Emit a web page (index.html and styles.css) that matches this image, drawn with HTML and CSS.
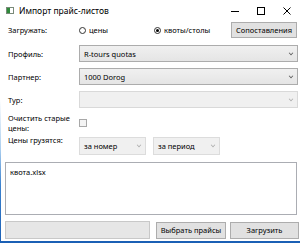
FILE: index.html
```html
<!DOCTYPE html>
<html lang="ru">
<head>
    <meta charset="UTF-8">
    <title>Импорт прайс-листов</title>
    <link rel="stylesheet" href="styles.css">
</head>
<body>
<div class="desk">
  <div class="window">
    <div class="titlebar">
      <span class="app-icon"><span></span></span>
      <span class="title">Импорт прайс-листов</span>
      <span class="wbtn">
        <svg width="8" height="8" viewBox="0 0 8 8"><path d="M0 4.5h8" stroke="#000" stroke-width="1"/></svg>
      </span>
      <span class="wbtn">
        <svg width="8" height="8" viewBox="0 0 8 8"><rect x="0.5" y="0.5" width="7" height="7" fill="none" stroke="#000" stroke-width="1"/></svg>
      </span>
      <span class="wbtn">
        <svg width="8" height="8" viewBox="0 0 8 8"><path d="M0.5 0.5l7 7M7.5 0.5l-7 7" stroke="#000" stroke-width="1"/></svg>
      </span>
    </div>

    <div class="content">
      <div class="row row-load">
        <label class="lbl">Загружать:</label>
        <label class="radio"><span class="dot"></span>цены</label>
        <label class="radio on"><span class="dot"></span>квоты/столы</label>
        <button class="btn btn-map">Сопоставления</button>
      </div>

      <div class="row row-sel">
        <label class="lbl">Профиль:</label>
        <div class="select wide">R-tours quotas<span class="chev"></span></div>
      </div>
      <div class="row row-sel">
        <label class="lbl">Партнер:</label>
        <div class="select wide">1000 Dorog<span class="chev"></span></div>
      </div>
      <div class="row row-sel">
        <label class="lbl">Тур:</label>
        <div class="select wide off"><span class="chev"></span></div>
      </div>

      <div class="row row-clear">
        <label class="lbl">Очистить старые<br>цены:</label>
        <span class="check"></span>
      </div>

      <div class="row row-mode">
        <label class="lbl">Цены грузятся:</label>
        <div class="select small first">за номер<span class="chev"></span></div>
        <div class="select small">за период<span class="chev"></span></div>
      </div>

      <div class="files">квота.xlsx</div>

      <div class="row row-bottom">
        <div class="status"></div>
        <button class="btn btn-pick">Выбрать прайсы</button>
        <button class="btn btn-go">Загрузить</button>
      </div>
    </div>
  </div>
</div>
</body>
</html>
```

FILE: styles.css
```css
* {
    box-sizing: border-box;
}
body {
    margin: 0;
    width: 300px;
    height: 243px;
    overflow: hidden;
    font-family: "Noto Sans", "Open Sans", sans-serif;
    font-size: 7.5px;
    color: #000;
}
.desk {
    width: 300px;
    height: 243px;
    padding-left: 1px;
    padding-bottom: 2px;
    background: linear-gradient(to bottom, #ffffff 0px, #ffffff 100px, #a9cdee 150px, #3c82cf 185px, #1a5fb4 243px);
}
.window {
    background: #fff;
    height: 241px;
    display: flex;
    flex-direction: column;
}
.titlebar {
    height: 21px;
    display: flex;
    align-items: center;
    padding-left: 5px;
}
.app-icon {
    width: 8px;
    height: 7px;
    border: 1px solid #7a8a7a;
    background: #fff;
    margin-right: 5px;
    display: flex;
}
.app-icon span {
    width: 3px;
    background: #2f8a3a;
}
.title {
    font-size: 8.5px;
    flex: 1;
}
.wbtn {
    width: 26px;
    height: 21px;
    display: flex;
    align-items: center;
    justify-content: center;
}
.content {
    padding: 1px 3px 0 4px;
}
.row {
    display: flex;
    align-items: center;
}
.lbl {
    width: 74px;
    flex-shrink: 0;
    padding-left: 3px;
    line-height: 10px;
}
.row-load {
    height: 16px;
}
.radio {
    display: flex;
    align-items: center;
    width: 75px;
    flex-shrink: 0;
}
.dot {
    width: 7px;
    height: 7px;
    border: 1px solid #333;
    border-radius: 50%;
    margin-right: 3px;
    display: flex;
    align-items: center;
    justify-content: center;
}
.radio.on .dot::after {
    content: "";
    width: 3px;
    height: 3px;
    border-radius: 50%;
    background: #000;
}
.btn {
    font-family: inherit;
    font-size: 7.5px;
    color: #000;
    background: #e1e1e1;
    border: 1px solid #adadad;
    padding: 0;
    height: 17px;
    margin: 0;
    flex-shrink: 0;
}
.btn-map {
    margin-left: auto;
    width: 66px;
    height: 16px;
}
.row-sel {
    margin-top: 6px;
}
.row-load + .row-sel {
    margin-top: 7px;
}
.select {
    height: 17px;
    border: 1px solid #acacac;
    background: linear-gradient(to bottom, #f0f0f0, #e5e5e5);
    display: flex;
    align-items: center;
    padding-left: 4px;
    flex-shrink: 0;
}
.select.wide {
    width: 219px;
}
.select.off {
    border-color: #d9d9d9;
    background: #f0f0f0;
}
.chev {
    margin-left: auto;
    margin-right: 4px;
    width: 4px;
    height: 4px;
    border-right: 1px solid #555;
    border-bottom: 1px solid #555;
    transform: rotate(45deg) scale(0.8);
    margin-top: -2px;
}
.select.off .chev,
.select.small .chev {
    border-color: #aaa;
}
.row-clear {
    margin-top: 5px;
    height: 20px;
}
.check {
    width: 8px;
    height: 8px;
    border: 1px solid #a8a8a8;
    background: #f4f4f4;
}
.row-mode {
    margin-top: 4px;
    align-items: flex-start;
}
.row-mode .lbl {
    margin-top: -2px;
}
.select.small {
    width: 67px;
    height: 18px;
    border-color: #dcdcdc;
    background: #f0f0f0;
}
.select.first {
    margin-right: 7px;
}
.files {
    margin-top: 7px;
    height: 53px;
    border: 1px solid #abadb3;
    padding: 4px 4px;
}
.row-bottom {
    margin-top: 6px;
}
.status {
    width: 145px;
    height: 18px;
    background: #e6e6e6;
    border: 1px solid #c8c8c8;
    flex-shrink: 0;
}
.btn-pick {
    margin-left: 6px;
    width: 70px;
}
.btn-go {
    margin-left: 4px;
    width: 69px;
}
```
